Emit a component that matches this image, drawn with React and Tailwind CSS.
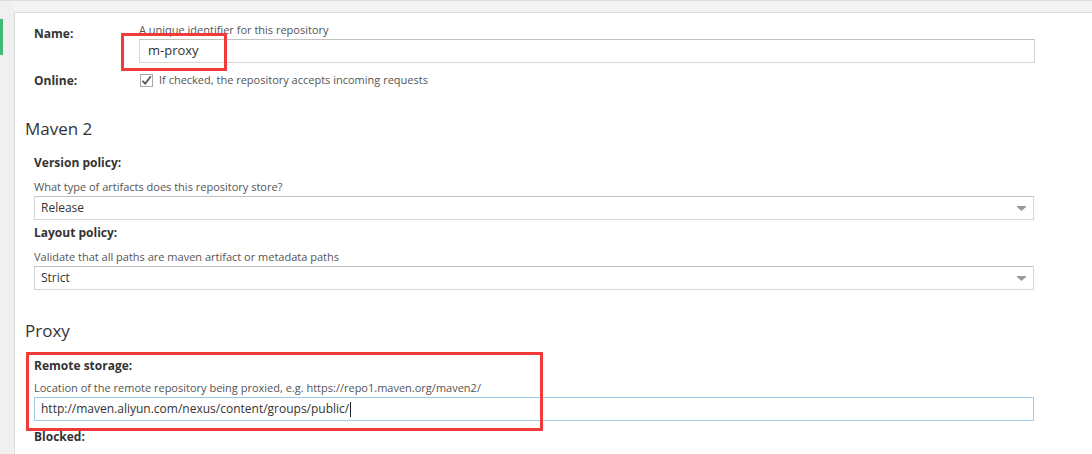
import React from "react";

const font = { fontFamily: '"Open Sans", "Liberation Sans", Arial, sans-serif' };

function Caret() {
  return (
    <svg width="9" height="5" viewBox="0 0 9 5" className="shrink-0">
      <path d="M0 0 H9 V1 L4.5 5 L0 1 Z" fill="#9a9a9a" />
    </svg>
  );
}

function Select({ value }) {
  return (
    <div className="mt-[2px] h-[24px] w-[1000px] border border-[#d6d6d6] border-t-[#c2c2c2] bg-white flex items-center justify-between pl-[6px] pr-[7px] text-[12px] text-[#333]">
      <span>{value}</span>
      <Caret />
    </div>
  );
}

function Field({ label, help, children, first }) {
  return (
    <div className={first ? "mt-[17px]" : "mt-[6px]"}>
      <div className="text-[12px] leading-[14px] font-bold text-[#333]">{label}</div>
      <div className="mt-[10px] text-[11px] leading-[14px] text-[#555]">{help}</div>
      {children}
    </div>
  );
}

export default function App() {
  return (
    <div className="relative h-[454px] w-[1092px] overflow-hidden bg-[#f0f0f0] border-t border-[#dcdcdc]" style={font}>
      {/* annotation boxes */}
      <div className="absolute left-[121px] top-[32px] h-[38px] w-[106px] border-[3px] border-[#f23a3a] z-10" />
      <div className="absolute left-[26px] top-[351px] h-[79px] w-[517px] border-[3px] border-[#f23a3a] z-10" />

      <div className="flex h-full">
        {/* left nav strip */}
        <div className="w-[14px] shrink-0">
          <div className="mt-[18px] h-[36px] w-[3px] bg-[#3fba78]" />
        </div>

        <div className="flex-1 flex flex-col">
          <div className="h-[12px] bg-[#f3f3f3] border-b border-[#dadada]" />
          <div className="flex-1 bg-white border-l border-[#dadada] pl-[10px] pt-[10px]">
            {/* Name / Online */}
            <div className="pl-[9px]">
              <div className="flex">
                <div className="w-[105px] shrink-0 pt-[4px] text-[12px] leading-[14px] font-bold text-[#333]">Name:</div>
                <div>
                  <div className="text-[11px] leading-[14px] text-[#555]">A unique identifier for this repository</div>
                  <div className="mt-[2px] h-[24px] w-[896px] border border-[#d6d6d6] border-t-[#c2c2c2] flex items-center pl-[8px] text-[13px] text-[#333]">
                    m-proxy
                  </div>
                </div>
              </div>
              <div className="mt-[10px] flex">
                <div className="w-[106px] shrink-0 pt-[1px] text-[12px] leading-[14px] font-bold text-[#333]">Online:</div>
                <div className="flex items-start">
                  <div className="mt-[1px] h-[13px] w-[13px] border border-[#a9a9a9] bg-white flex items-center justify-center">
                    <svg width="11" height="11" viewBox="0 0 11 11">
                      <path d="M1.5 5.8 L4.3 8.6 L9.8 1.2" fill="none" stroke="#555" strokeWidth="1.7" />
                    </svg>
                  </div>
                  <div className="ml-[6px] text-[11px] leading-[14px] text-[#555]">If checked, the repository accepts incoming requests</div>
                </div>
              </div>
            </div>

            {/* Maven 2 */}
            <div className="mt-[31px] text-[17px] leading-[20px] font-medium text-[#333]">Maven 2</div>
            <div className="pl-[9px]">
              <Field first label="Version policy:" help="What type of artifacts does this repository store?">
                <Select value="Release" />
              </Field>
              <Field label="Layout policy:" help="Validate that all paths are maven artifact or metadata paths">
                <Select value="Strict" />
              </Field>
            </div>

            {/* Proxy */}
            <div className="mt-[31px] text-[17px] leading-[20px] font-medium text-[#333]">Proxy</div>
            <div className="pl-[9px]">
              <div className="mt-[18px] text-[12px] leading-[14px] font-bold text-[#333]">Remote storage:</div>
              <div className="mt-[8px] text-[11px] leading-[14px] text-[#555]">
                Location of the remote repository being proxied, e.g. https://repo1.maven.org/maven2/
              </div>
              <div className="mt-[2px] h-[24px] w-[1000px] border border-[#9fcbeb] flex items-center pl-[6px] text-[12px] text-[#333]">
                <span>http://maven.aliyun.com/nexus/content/groups/public/</span>
                <span className="ml-[1px] h-[15px] w-px bg-[#222]" />
              </div>
              <div className="mt-[9px] text-[12px] leading-[14px] font-bold text-[#333]">Blocked:</div>
            </div>
          </div>
        </div>
      </div>
    </div>
  );
}
